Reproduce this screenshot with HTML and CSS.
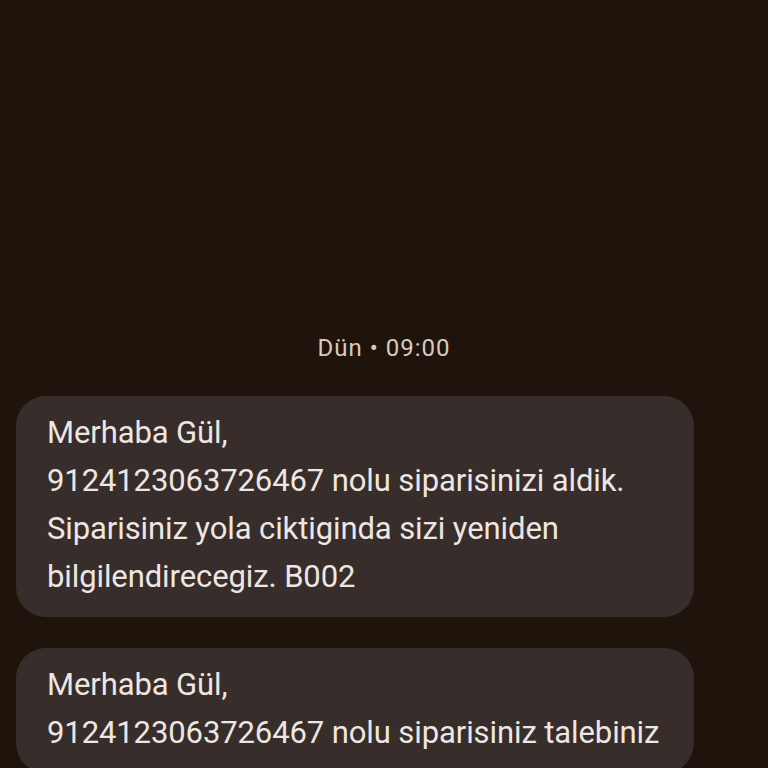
FILE: index.html
```html
<!DOCTYPE html>
<html lang="tr">
<head>
  <meta charset="UTF-8">
  <meta name="viewport" content="width=device-width, initial-scale=1.0">
  <title>Mesajlar</title>
  <link rel="stylesheet" href="styles.css">
</head>
<body>
  <main class="thread">
    <div class="stamp">Dün • 09:00</div>
    <div class="bubble">
      Merhaba Gül,<br>
      9124123063726467 nolu siparisinizi aldik. Siparisiniz yola ciktiginda sizi yeniden bilgilendirecegiz. B002
    </div>
    <div class="bubble">
      Merhaba Gül,<br>
      9124123063726467 nolu siparisiniz talebiniz
    </div>
  </main>
</body>
</html>
```

FILE: styles.css
```css
html, body {
  height: 100%;
}

body {
  margin: 0;
  background: #1f140c;
  font-family: 'Roboto', 'Noto Sans', sans-serif;
  overflow: hidden;
}

.thread {
  display: flex;
  flex-direction: column;
  padding: 333px 74px 0 16px;
  gap: 31px;
}

.stamp {
  text-align: center;
  color: #d8cabc;
  font-size: 24px;
  line-height: 30px;
  letter-spacing: 1px;
  margin-right: -58px;
  margin-bottom: 2px;
}

.bubble {
  background: #372d2a;
  color: #ede6e2;
  border-radius: 30px;
  padding: 13px 20px 16px 31px;
  font-size: 31px;
  line-height: 48px;
  letter-spacing: -0.1px;
}
```
